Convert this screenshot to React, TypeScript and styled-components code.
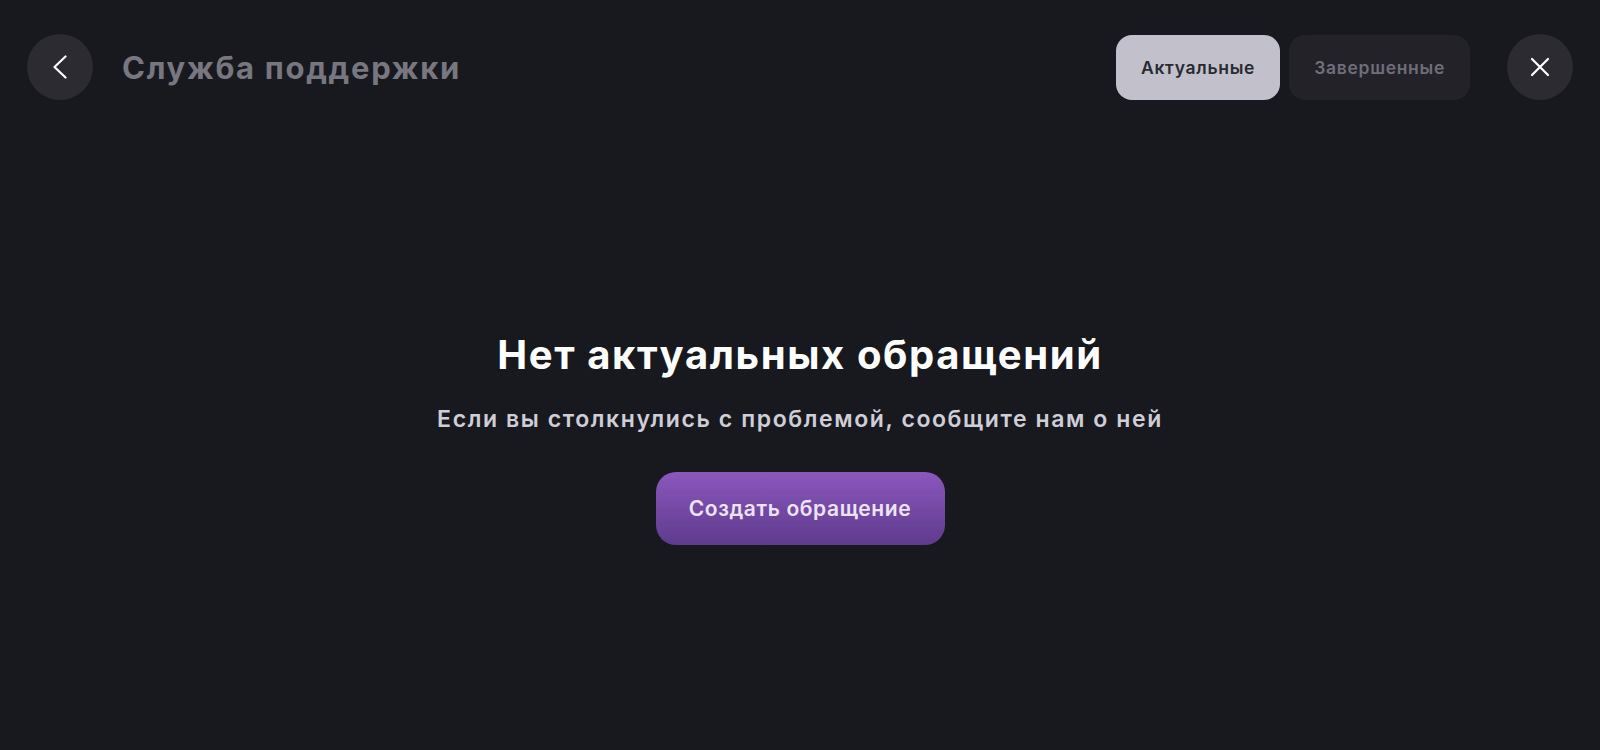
import styled, { createGlobalStyle } from "styled-components";

const GlobalStyle = createGlobalStyle`
  html, body {
    margin: 0;
    padding: 0;
    background: #18191f;
  }
  body {
    font-family: Inter, "Noto Sans", sans-serif;
  }
`;

type TabProps = { $active?: boolean };

const Page = styled.div`
  display: flex;
  flex-direction: column;
  height: 750px;
  background: #18191f;
`;

const Header = styled.header`
  display: flex;
  align-items: center;
  height: 134px;
  padding: 0 27px;
  box-sizing: border-box;
`;

const RoundButton = styled.button`
  display: flex;
  align-items: center;
  justify-content: center;
  width: 66px;
  height: 66px;
  border: none;
  border-radius: 50%;
  background: #2b2b31;
  padding: 0;
  flex-shrink: 0;
`;

const Title = styled.h1`
  margin: 0 0 0 29px;
  font-size: 31px;
  font-weight: 700;
  color: #78777f;
  letter-spacing: 1.7px;
`;

const Tabs = styled.div`
  display: flex;
  gap: 9px;
  margin-left: auto;
  margin-right: 37px;
`;

const Tab = styled.button<TabProps>`
  height: 65px;
  padding: 0 25px;
  border: none;
  border-radius: 16px;
  font-family: Inter, "Noto Sans", sans-serif;
  font-size: 17.5px;
  font-weight: 600;
  letter-spacing: 0.7px;
  background: ${(p) => (p.$active ? "#c2c1cb" : "#222228")};
  color: ${(p) => (p.$active ? "#2a2a31" : "#6f6e78")};
`;

const Main = styled.main`
  flex: 1;
  display: flex;
  flex-direction: column;
  align-items: center;
  justify-content: center;
  padding-bottom: 8px;
`;

const Heading = styled.h2`
  margin: 0;
  font-size: 40px;
  font-weight: 700;
  color: #ffffff;
  line-height: 46px;
  letter-spacing: 1.6px;
`;

const Subtitle = styled.p`
  margin: 27px 0 0;
  font-size: 23px;
  font-weight: 600;
  color: #cfced7;
  line-height: 28px;
  letter-spacing: 1.6px;
`;

const PrimaryButton = styled.button`
  margin-top: 39px;
  width: 289px;
  height: 73px;
  border: none;
  border-radius: 20px;
  background: linear-gradient(180deg, #8b57bd 0%, #5e3b8d 100%);
  color: #ece4f4;
  font-family: Inter, "Noto Sans", sans-serif;
  font-size: 21px;
  font-weight: 600;
  letter-spacing: 0.6px;
`;

const BackIcon = () => (
  <svg width="24" height="24" viewBox="0 0 24 24" fill="none">
    <path
      d="M17.5 1.5 L6.5 12 L17.5 22.5"
      stroke="#ffffff"
      strokeWidth="2.2"
      strokeLinecap="round"
      strokeLinejoin="round"
    />
  </svg>
);

const CloseIcon = () => (
  <svg width="20" height="20" viewBox="0 0 20 20" fill="none">
    <path
      d="M2 2 L18 18 M18 2 L2 18"
      stroke="#ffffff"
      strokeWidth="2.2"
      strokeLinecap="round"
    />
  </svg>
);

const App = () => {
  return (
    <>
      <GlobalStyle />
      <Page>
        <Header>
          <RoundButton aria-label="Назад">
            <BackIcon />
          </RoundButton>
          <Title>Служба поддержки</Title>
          <Tabs>
            <Tab $active>Актуальные</Tab>
            <Tab>Завершенные</Tab>
          </Tabs>
          <RoundButton aria-label="Закрыть">
            <CloseIcon />
          </RoundButton>
        </Header>
        <Main>
          <Heading>Нет актуальных обращений</Heading>
          <Subtitle>Если вы столкнулись с проблемой, сообщите нам о ней</Subtitle>
          <PrimaryButton>Создать обращение</PrimaryButton>
        </Main>
      </Page>
    </>
  );
};

export default App;
